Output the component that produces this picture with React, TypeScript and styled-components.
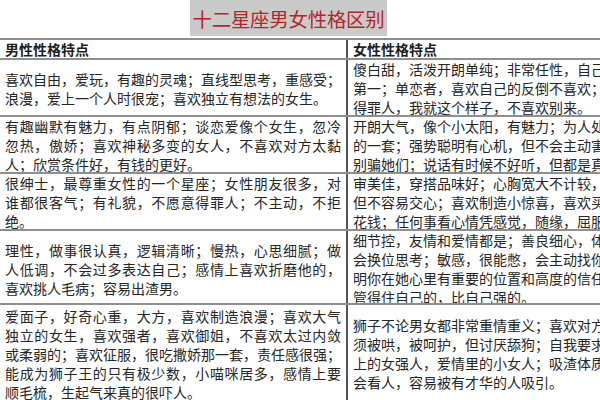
import styled, { createGlobalStyle } from "styled-components";

const GlobalStyle = createGlobalStyle`
  html, body {
    margin: 0;
    padding: 0;
    background: #fff;
  }
  body {
    font-family: "Noto Sans CJK SC", "Noto Sans", sans-serif;
    color: #262626;
  }
  * {
    box-sizing: border-box;
  }
`;

type Entry = {
  height: number;
  male: string[];
  female: string[];
};

const entries: Entry[] = [
  {
    height: 57,
    male: [
      "喜欢自由，爱玩，有趣的灵魂；直线型思考，重感受；",
      "浪漫，爱上一个人时很宠；喜欢独立有想法的女生。",
    ],
    female: [
      "傻白甜，活泼开朗单纯；非常任性，自己永远",
      "第一；单恋者，喜欢自己的反倒不喜欢；不怕",
      "得罪人，我就这个样子，不喜欢别来。",
    ],
  },
  {
    height: 57,
    male: [
      "有趣幽默有魅力，有点阴郁；谈恋爱像个女生，忽冷",
      "忽热，傲娇；喜欢神秘多变的女人，不喜欢对方太黏",
      "人；欣赏条件好，有钱的更好。",
    ],
    female: [
      "开朗大气，像个小太阳，有魅力；为人处世有自己",
      "的一套；强势聪明有心机，但不会主动害人，",
      "别骗她们；说话有时候不好听，但都是真心话。",
    ],
  },
  {
    height: 57,
    male: [
      "很绅士，最尊重女性的一个星座；女性朋友很多，对",
      "谁都很客气；有礼貌，不愿意得罪人；不主动，不拒",
      "绝。",
    ],
    female: [
      "审美佳，穿搭品味好；心胸宽大不计较，朋友多，",
      "但不容易交心；喜欢制造小惊喜，喜欢买买买，",
      "花钱；任何事看心情凭感觉，随缘，屈服于",
    ],
  },
  {
    height: 74,
    male: [
      "理性，做事很认真，逻辑清晰；慢热，心思细腻；做",
      "人低调，不会过多表达自己；感情上喜欢折磨他的，",
      "喜欢挑人毛病；容易出渣男。",
    ],
    female: [
      "细节控，友情和爱情都是；善良细心，体贴，",
      "会换位思考；敏感，很能憋，会主动找你证",
      "明你在她心里有重要的位置和高度的信任；",
      "管得住自己的，比自己强的。",
    ],
  },
  {
    height: 100,
    male: [
      "爱面子，好奇心重，大方，喜欢制造浪漫；喜欢大气",
      "独立的女生，喜欢强者，喜欢御姐，不喜欢太过内敛",
      "或柔弱的；喜欢征服，很吃撒娇那一套，责任感很强；",
      "能成为狮子王的只有极少数，小喵咪居多，感情上要",
      "顺毛梳，生起气来真的很吓人。",
    ],
    female: [
      "狮子不论男女都非常重情重义；喜欢对方必",
      "须被哄，被呵护，但讨厌舔狗；自我要求高，",
      "上的女强人，爱情里的小女人；吸渣体质，不",
      "会看人，容易被有才华的人吸引。",
    ],
  },
];

export default function App(): JSX.Element {
  return (
    <Page>
      <GlobalStyle />
      <TitleBar>
        <Title>十二星座男女性格区别</Title>
      </TitleBar>
      <Table>
        <Row $h={20}>
          <HeadCell>男性性格特点</HeadCell>
          <HeadCell>女性性格特点</HeadCell>
        </Row>
        {entries.map((entry, i) => (
          <Row key={i} $h={entry.height}>
            <MaleCell>
              {entry.male.map((line, j) => (
                <Line key={j} $full={j < entry.male.length - 1}>
                  {line}
                </Line>
              ))}
            </MaleCell>
            <FemaleCell>
              {entry.female.map((line, j) => (
                <Line key={j}>{line}</Line>
              ))}
            </FemaleCell>
          </Row>
        ))}
      </Table>
    </Page>
  );
}

const Page = styled.div`
  width: 600px;
  height: 400px;
  overflow: hidden;
  background: #fff;
`;

const TitleBar = styled.div`
  height: 38px;
  display: flex;
  align-items: flex-start;
`;

const Title = styled.div`
  margin-left: 190px;
  width: 197px;
  height: 36px;
  background: #cacaca;
  color: #b3262b;
  font-size: 19.5px;
  font-weight: 400;
  letter-spacing: -0.3px;
  display: flex;
  align-items: center;
  justify-content: center;
`;

const Table = styled.div`
  display: flex;
  flex-direction: column;
  width: 700px;
`;

const Row = styled.div<{ $h: number }>`
  display: grid;
  grid-template-columns: 348px 352px;
  height: ${(p) => p.$h}px;
  border-top: 2px solid #8f8f8f;
  flex-shrink: 0;
`;

const Cell = styled.div`
  display: flex;
  flex-direction: column;
  justify-content: center;
  font-size: 14px;
  line-height: 19px;
  white-space: nowrap;
`;

const HeadCell = styled(Cell)`
  font-weight: 700;
  padding: 0 5px;
  color: #1e1e1e;
  &:first-child {
    border-right: 2px solid #555;
  }
`;

const MaleCell = styled(Cell)`
  padding: 0 5px;
  border-right: 2px solid #555;
`;

const FemaleCell = styled(Cell)`
  padding: 0 5px;
`;

const Line = styled.div<{ $full?: boolean }>`
  text-align: justify;
  text-align-last: ${(p) => (p.$full ? "justify" : "left")};
`;
